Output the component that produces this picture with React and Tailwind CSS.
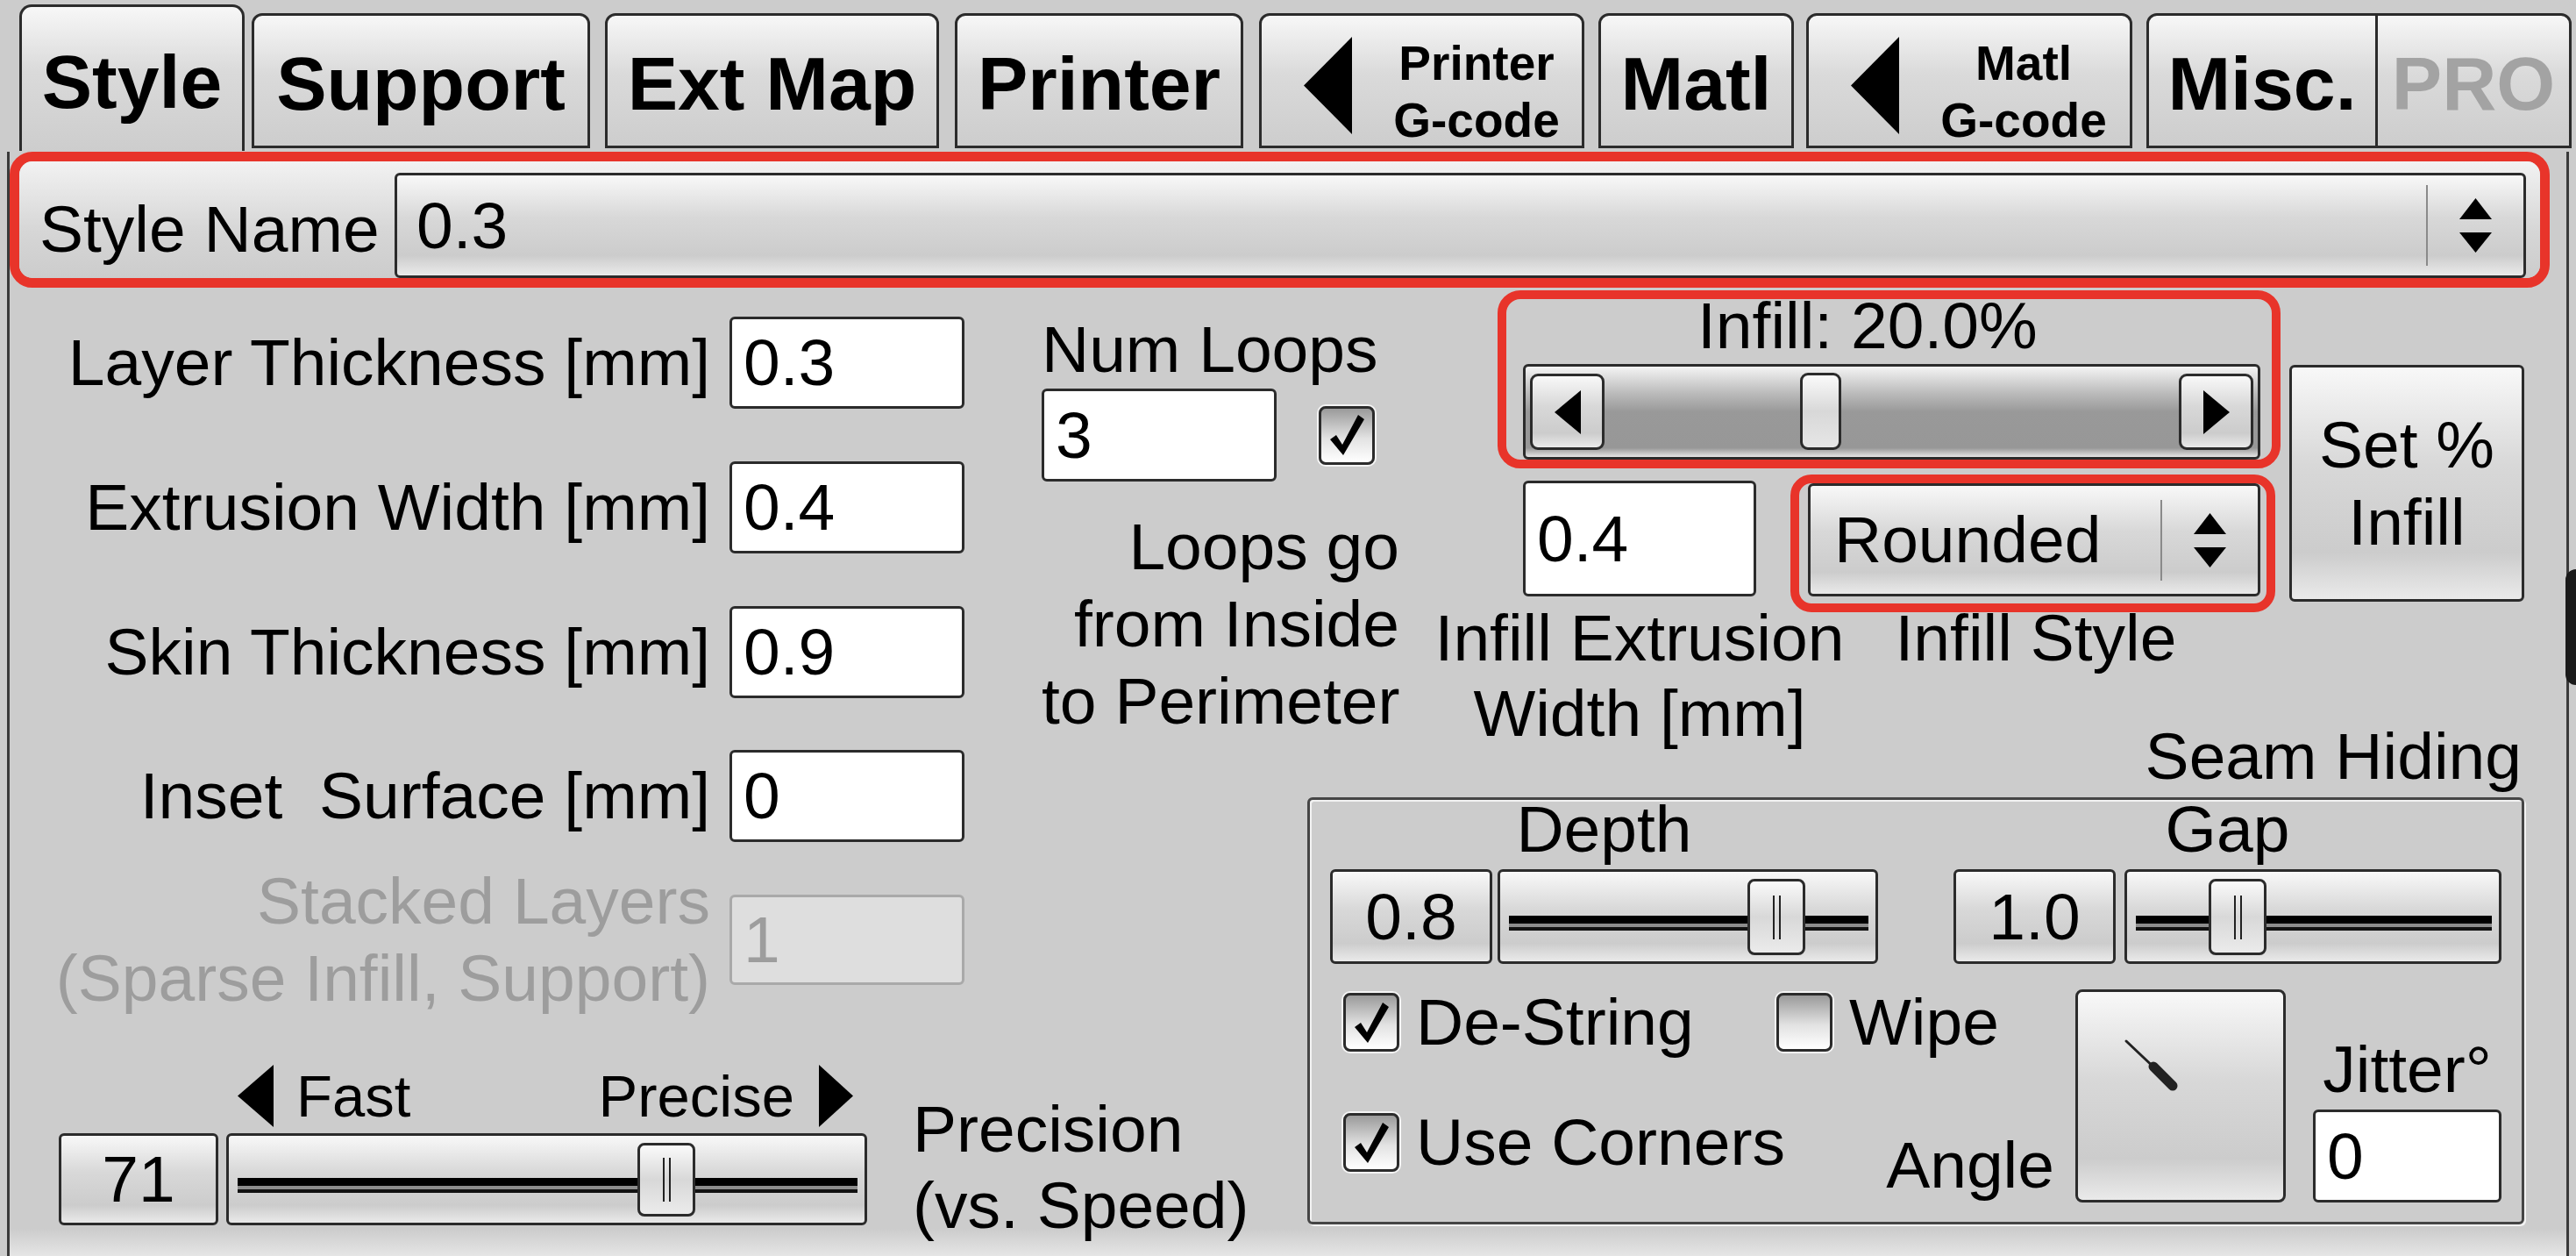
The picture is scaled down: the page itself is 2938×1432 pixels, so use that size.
import React from 'react';

const GLEAM = "bg-[linear-gradient(to_bottom,#f8f8f8_0%,#d8d8d8_42%,#cccccc_80%,#eaeaea_100%)]";
const TABBG = "bg-[linear-gradient(to_bottom,#f7f7f7_0%,#dadada_45%,#cdcdcd_100%)]";
const EDGE = "border-[3px] border-[#2b2b2b]";
const RED = "border-[#e8342a]";

function Tri({ dir = 'left', w, h, className = '' }) {
  let pts = `${w},0 0,${h / 2} ${w},${h}`;
  if (dir === 'right') pts = `0,0 ${w},${h / 2} 0,${h}`;
  if (dir === 'up') pts = `0,${h} ${w / 2},0 ${w},${h}`;
  if (dir === 'down') pts = `0,0 ${w},0 ${w / 2},${h}`;
  return (
    <svg width={w} height={h} className={`shrink-0 ${className}`}>
      <polygon points={pts} fill="#000" />
    </svg>
  );
}

function Tab({ className = '', children }) {
  return (
    <div className={`shrink-0 ${EDGE} ${TABBG} ${className}`}>
      {children}
    </div>
  );
}

function TabLabel({ children, className = '' }) {
  return (
    <div className={`flex justify-center text-[86px] leading-[86px] font-bold ${className}`}>
      {children}
    </div>
  );
}

function GcodeTab({ className, top }) {
  return (
    <Tab className={`h-[154px] mb-[3px] rounded-t-[12px] flex items-start pl-[48px] pt-[24px] ${className}`}>
      <Tri dir="left" w={55} h={111} />
      <div className="ml-[42px] mt-[-2px] w-[200px] text-center text-[55px] leading-[65px] font-bold">
        <div>{top}</div>
        <div>G-code</div>
      </div>
    </Tab>
  );
}

function Field({ value, className = '', disabled }) {
  return (
    <div
      className={`shrink-0 flex items-center pl-[13px] rounded-[6px] border-[3px] text-[75px] leading-none ${
        disabled ? 'bg-[#dedede] border-[#a9a9a9] text-[#9d9d9d]' : 'bg-white border-[#2b2b2b]'
      } ${className}`}
    >
      {value}
    </div>
  );
}

function Select({ value, className = '' }) {
  return (
    <div className={`shrink-0 flex items-center ${EDGE} rounded-[6px] ${GLEAM} text-[75px] leading-none ${className}`}>
      <div className="flex-1">{value}</div>
      <div className="w-[2px] h-[92px] bg-[#8a8a8a]" />
      <div className="w-[109px] flex flex-col items-center gap-[15px]">
        <Tri dir="up" w={37} h={24} />
        <Tri dir="down" w={37} h={23} />
      </div>
    </div>
  );
}

function Check({ checked }) {
  return (
    <div className="shrink-0 w-[64px] h-[67px] rounded-[8px] border-[3px] border-[#2b2b2b] bg-[linear-gradient(to_bottom,#9a9a9a,#e2e2e2_55%,#ffffff)] shadow-[0_0_0_2px_#f4f4f4] flex items-center justify-center">
      {checked && (
        <svg width="42" height="50" viewBox="0 0 42 50">
          <path d="M2 30 L9 25 L16 36 L34 2 L41 7 L17 48 Z" fill="#000" />
        </svg>
      )}
    </div>
  );
}

function ValueBox({ value, className = '' }) {
  return (
    <div className={`shrink-0 flex items-center justify-center ${EDGE} rounded-[6px] ${GLEAM} text-[75px] leading-none ${className}`}>
      {value}
    </div>
  );
}

function Track({ className = '', thumb }) {
  return (
    <div className={`relative shrink-0 ${EDGE} rounded-[6px] ${GLEAM} flex flex-col justify-center pl-[10px] pr-[8px] pt-[14px] ${className}`}>
      <div className="h-[9px] bg-black" />
      <div className="h-[4px] bg-[#8c8c8c]" />
      <div className="h-[4px] bg-[#111111]" />
      <div className={`absolute top-[8px] bottom-[7px] w-[66px] ${EDGE} rounded-[8px] bg-[linear-gradient(to_bottom,#fafafa,#d8d8d8_50%,#ebebeb)] flex items-center justify-center gap-[5px] ${thumb}`}>
        <div className="w-[2px] h-[50px] bg-[#222222]" />
        <div className="w-[2px] h-[50px] bg-[#222222]" />
      </div>
    </div>
  );
}

function LabeledField({ label, value }) {
  return (
    <div className="flex items-center h-[105px]">
      <div className="w-[799px] text-right text-[75px] leading-[75px] whitespace-pre">{label}</div>
      <Field value={value} className="ml-[22px] w-[268px] h-[105px]" />
    </div>
  );
}

function CheckLabel({ checked, label }) {
  return (
    <div className="flex items-center h-[67px]">
      <Check checked={checked} />
      <span className="ml-[19px] text-[75px] leading-[67px] whitespace-nowrap">{label}</span>
    </div>
  );
}

export default function App() {
  return (
    <div className="relative w-[2938px] h-[1432px] overflow-hidden bg-[#cccccc] font-[family-name:Liberation_Sans,Arial,sans-serif] text-black">
      {/* tab strip */}
      <div className="flex items-end h-[172px] pl-[22px]">
        <Tab className="w-[257px] h-[167px] border-b-0 rounded-t-[14px] pt-[42px]">
          <TabLabel>Style</TabLabel>
        </Tab>
        <Tab className="ml-[8px] w-[386px] h-[154px] mb-[3px] rounded-t-[12px] pt-[34px]">
          <TabLabel>Support</TabLabel>
        </Tab>
        <Tab className="ml-[17px] w-[381px] h-[154px] mb-[3px] rounded-t-[12px] pt-[34px]">
          <TabLabel>Ext Map</TabLabel>
        </Tab>
        <Tab className="ml-[18px] w-[329px] h-[154px] mb-[3px] rounded-t-[12px] pt-[34px]">
          <TabLabel>Printer</TabLabel>
        </Tab>
        <GcodeTab className="ml-[18px] w-[371px]" top="Printer" />
        <Tab className="ml-[16px] w-[223px] h-[154px] mb-[3px] rounded-t-[12px] pt-[34px]">
          <TabLabel>Matl</TabLabel>
        </Tab>
        <GcodeTab className="ml-[14px] w-[372px]" top="Matl" />
        <Tab className="ml-[16px] w-[485px] h-[154px] mb-[3px] rounded-t-[12px] flex">
          <TabLabel className="w-[258px] pt-[34px]">Misc.</TabLabel>
          <div className="w-[3px] bg-[#2b2b2b]" />
          <TabLabel className="flex-1 pt-[34px] text-[#a3a3a3]">PRO</TabLabel>
        </Tab>
      </div>

      {/* panel */}
      <div className="ml-[8px] w-[2922px] h-[1260px] border-l-[3px] border-r-[3px] border-[#3a3a3a] bg-[linear-gradient(to_bottom,#cccccc_0px,#cccccc_1228px,#e6e6e6_1260px)]">
        {/* style name */}
        <div className={`mt-[1px] w-[2897px] h-[155px] border-[11px] ${RED} rounded-[26px]`}>
          <div className="h-full rounded-[15px] bg-[linear-gradient(to_bottom,#f2f2f2,#d6d6d6_60%,#cccccc)] flex items-end pl-[23px]">
            <div className="w-[405px] text-[75px] leading-[75px] pb-[18px]">Style Name</div>
            <Select value="0.3" className="w-[2431px] h-[120px] pl-[22px]" />
          </div>
        </div>

        {/* upper band */}
        <div className="flex h-[497px]">
          <div className="w-[1089px] shrink-0 flex flex-col pt-[33px] gap-[60px]">
            <LabeledField label="Layer Thickness [mm]" value="0.3" />
            <LabeledField label="Extrusion Width [mm]" value="0.4" />
            <LabeledField label="Skin Thickness [mm]" value="0.9" />
          </div>

          <div className="w-[510px] shrink-0 flex flex-col pl-[88px] pt-[33px] text-[75px]">
            <div className="leading-[75px]">Num Loops</div>
            <div className="mt-[7px] flex items-center">
              <Field value="3" className="w-[268px] h-[106px]" />
              <div className="ml-[48px]">
                <Check checked />
              </div>
            </div>
            <div className="mt-[30px] w-[408px] text-right leading-[88px] whitespace-nowrap">
              <div>Loops go</div>
              <div>from Inside</div>
              <div>to Perimeter</div>
            </div>
          </div>

          <div className="flex shrink-0">
            <div className="w-[991px] flex flex-col">
              <div className={`ml-[98px] mt-[3px] w-[893px] h-[209px] border-[10px] ${RED} rounded-[26px] flex flex-col`}>
                <div className="pl-[218px] text-[75px] leading-[60px]">Infill: 20.0%</div>
                <div className="relative mt-[14px] ml-[19px] w-[841px] h-[109px] border-[3px] border-[#2b2b2b] rounded-[6px] bg-[linear-gradient(to_bottom,#f4f4f4,#bababa_30%,#999999_50%,#979797_90%,#e6e6e6)] flex items-center justify-between px-[5px]">
                  <div className={`w-[85px] h-[87px] ${EDGE} rounded-[9px] ${GLEAM} flex items-center justify-center`}>
                    <Tri dir="left" w={30} h={50} />
                  </div>
                  <div className={`w-[85px] h-[87px] ${EDGE} rounded-[9px] ${GLEAM} flex items-center justify-center`}>
                    <Tri dir="right" w={30} h={50} />
                  </div>
                  <div className={`absolute left-[313px] top-[7px] w-[47px] h-[88px] ${EDGE} rounded-[9px] bg-[linear-gradient(to_bottom,#fafafa,#d8d8d8_50%,#e6e6e6)]`} />
                </div>
              </div>

              <div className="mt-[7px] flex items-start">
                <Field value="0.4" className="ml-[127px] mt-[7px] w-[266px] h-[132px]" />
                <div className={`ml-[39px] w-[553px] h-[157px] border-[10px] ${RED} rounded-[24px] pl-[10px]`}>
                  <Select value="Rounded" className="w-[516px] h-[129px] pl-[27px]" />
                </div>
              </div>

              <div className="mt-[-14px] flex text-[75px] leading-[86px] whitespace-nowrap">
                <div className="w-[520px] text-center">
                  <div>Infill Extrusion</div>
                  <div>Width [mm]</div>
                </div>
                <div className="w-[384px] text-center">Infill Style</div>
              </div>
            </div>

            <div className={`ml-[10px] mt-[88px] w-[268px] h-[270px] ${EDGE} rounded-[6px] ${GLEAM} flex flex-col items-center justify-center text-[75px] leading-[88px]`}>
              <div>Set %</div>
              <div>Infill</div>
            </div>
          </div>
        </div>

        {/* lower band */}
        <div className="flex h-[607px]">
          <div className="w-[1469px] shrink-0 flex flex-col">
            <div className="mt-[30px]">
              <LabeledField label="Inset  Surface [mm]" value="0" />
            </div>
            <div className="mt-[23px] flex items-center">
              <div className="w-[799px] text-right text-[75px] leading-[88px] text-[#9d9d9d] whitespace-nowrap">
                <div>Stacked Layers</div>
                <div>(Sparse Infill, Support)</div>
              </div>
              <Field value="1" disabled className="ml-[22px] w-[268px] h-[103px]" />
            </div>

            <div className="mt-[55px] flex items-start">
              <div className="ml-[56px] w-[922px] flex flex-col">
                <div className="h-[71px] flex items-center pl-[204px] pr-[16px] text-[67px] leading-[71px]">
                  <Tri dir="left" w={41} h={71} />
                  <span className="ml-[26px]">Fast</span>
                  <div className="flex-1" />
                  <span>Precise</span>
                  <Tri dir="right" w={39} h={71} className="ml-[28px]" />
                </div>
                <div className="mt-[7px] flex">
                  <ValueBox value="71" className="w-[182px] h-[105px]" />
                  <Track className="ml-[9px] w-[731px] h-[105px]" thumb="left-[466px]" />
                </div>
              </div>
              <div className="ml-[52px] mt-[30px] text-[75px] leading-[87px] whitespace-nowrap">
                <div>Precision</div>
                <div>(vs. Speed)</div>
              </div>
            </div>
          </div>

          <div className="w-[1447px] shrink-0 flex flex-col">
            <div className="ml-[11px] mt-[7px] w-[1388px] pr-[3px] text-right text-[75px] leading-[60px]">Seam Hiding</div>
            <div className="ml-[11px] mt-[17px] w-[1388px] h-[487px] border-[3px] border-[#454545] rounded-[6px] shadow-[inset_2px_2px_0_#f2f2f2,2px_2px_0_#f2f2f2] flex flex-col pl-[23px]">
              <div className="mt-[3px] flex text-[75px] leading-[60px]">
                <div className="w-[625px] text-center">Depth</div>
                <div className="ml-[86px] w-[625px] text-center">Gap</div>
              </div>
              <div className="mt-[16px] flex h-[108px]">
                <ValueBox value="0.8" className="w-[185px] h-[108px]" />
                <Track className="ml-[6px] w-[434px] h-[108px]" thumb="left-[282px]" />
                <ValueBox value="1.0" className="ml-[86px] w-[185px] h-[108px]" />
                <Track className="ml-[10px] w-[430px] h-[108px]" thumb="left-[93px]" />
              </div>

              <div className="mt-[29px] flex h-[243px] pl-[15px]">
                <div className="w-[811px] flex flex-col">
                  <div className="mt-[4px] flex items-center h-[67px]">
                    <div className="w-[494px]">
                      <CheckLabel checked label="De-String" />
                    </div>
                    <CheckLabel label="Wipe" />
                  </div>
                  <div className="mt-[70px] flex justify-between items-start">
                    <CheckLabel checked label="Use Corners" />
                    <div className="mt-[29px] text-[75px] leading-[60px]">Angle</div>
                  </div>
                </div>
                <div className={`ml-[24px] w-[240px] h-[243px] ${EDGE} rounded-[8px] ${GLEAM}`}>
                  <svg className="w-full h-full" viewBox="0 0 234 237">
                    <path d="M55 56 L92 91" stroke="#222" strokeWidth="3" strokeLinecap="round" />
                    <path d="M86 85 L108 107" stroke="#222" strokeWidth="11" strokeLinecap="round" />
                  </svg>
                </div>
                <div className="ml-[31px] w-[215px] flex flex-col">
                  <div className="mt-[61px] text-center text-[75px] leading-[60px]">Jitter°</div>
                  <Field value="0" className="mt-[16px] w-[215px] h-[106px]" />
                </div>
              </div>
            </div>
          </div>
        </div>
      </div>

      {/* dark edge of a neighbouring window */}
      <div className="absolute right-0 top-[649px] w-[12px] h-[132px] rounded-l-[12px] bg-[#1a1a1a]" />
    </div>
  );
}
